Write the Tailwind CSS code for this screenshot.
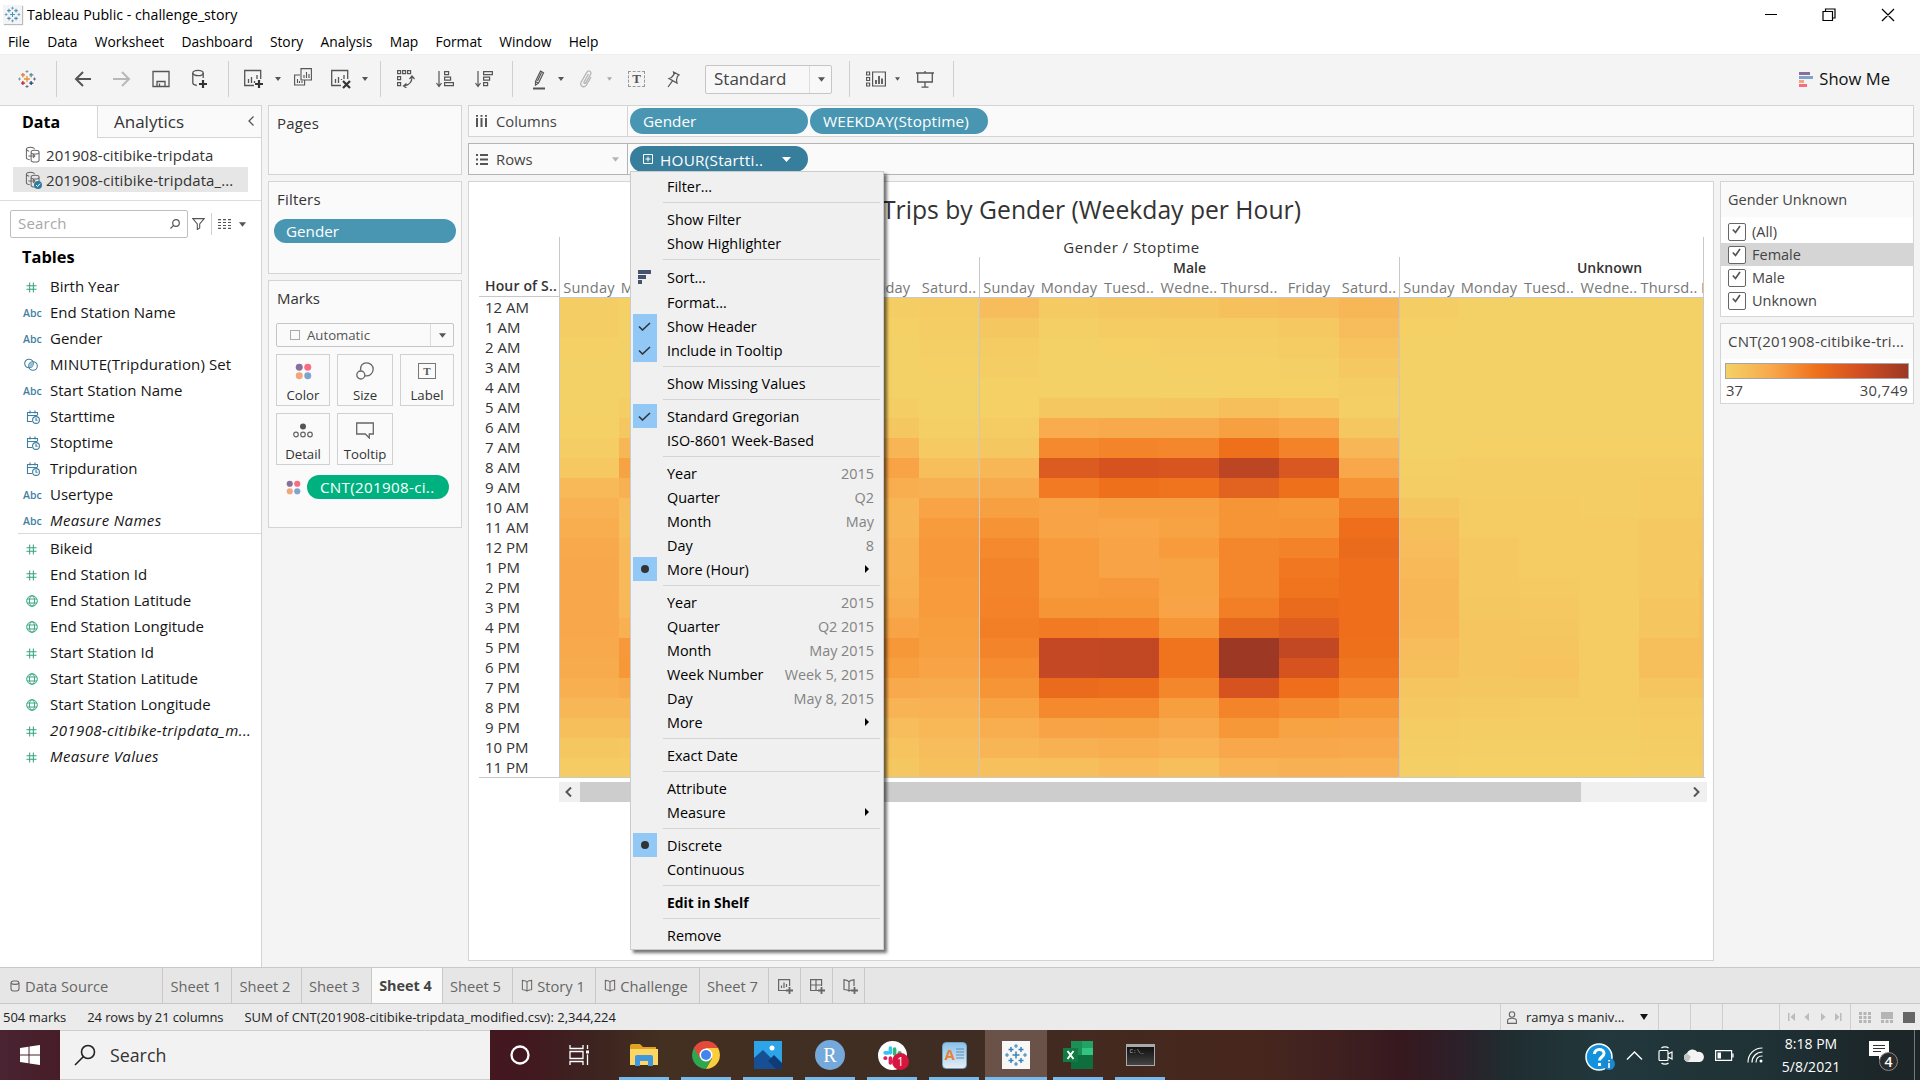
<!DOCTYPE html>
<html lang="en">
<head>
<meta charset="utf-8">
<title>Tableau Public - challenge_story</title>
<script src="https://cdn.jsdelivr.net/npm/@tailwindcss/browser@4"></script>
</head>
<body class="w-[1920px] h-[1080px] overflow-hidden relative bg-[#f4f4f4] text-[15px] leading-5 text-[#333] flex flex-col font-['Open_Sans','Noto_Sans',sans-serif] whitespace-nowrap">

<svg class="hidden">
  <symbol id="i-hash" viewBox="0 0 12 12"><path d="M4 .5v11M8 .5v11M.5 4h11M.5 8h11" fill="none" stroke="#31a37c" stroke-width="1.1"/></symbol>
  <symbol id="i-globe" viewBox="0 0 12 12"><g fill="none" stroke="#3aa883" stroke-width="1"><circle cx="6" cy="6" r="5.3"/><ellipse cx="6" cy="6" rx="2.6" ry="5.3"/><path d="M1 4h10M1 8h10"/></g></symbol>
  <symbol id="i-set" viewBox="0 0 14 14"><g fill="none" stroke="#3f7f9f" stroke-width="1.1"><circle cx="5" cy="5.500" r="4.300"/><circle cx="9" cy="8" r="4.300"/></g><path d="M5.200 6c1.300-2 2.800-2.400 3.800-1.700.5 2.500-.3 4.300-2.600 5.200-1.400-.6-1.800-2-1.200-3.500z" fill="#9cbfd0"/></symbol>
  <symbol id="i-cal" viewBox="0 0 14 14"><g fill="none" stroke="#3f7f9f" stroke-width="1.100"><path d="M6 11.500H1.500V2.500h10V5M1.500 5.500h10M4 .5v3M9 .5v3"/><circle cx="10" cy="10" r="3.400"/><path d="M10 8v2.200h1.600"/></g></symbol>
  <symbol id="i-db" viewBox="0 0 16 18"><g fill="none" stroke="#666" stroke-width="1.100"><path d="M1.500 3.500v9c0 1 1.500 1.800 3.500 2M1.500 3.500c0-1.300 2-2.200 4.300-2.200s4.200.9 4.200 2.200M1.500 3.500c0 1 1.500 1.800 3 2"/><path d="M6.500 6.500v8.500c0 1 2 2 4.200 2s4.300-1 4.300-2V6.500c0-1-2-2-4.300-2s-4.200 1-4.200 2zc0 1 2 2 4.200 2s4.300-1 4.300-2M3.500 10.500h7M8.500 8.500l2 2-2 2"/></g></symbol>
  <symbol id="i-tab" viewBox="0 0 24 24"><g fill="none" stroke-width="1.500" stroke="currentColor"><path d="M12 8.500v7M8.500 12h7"/><path d="M7 4v5M4.500 6.500h5M17 4v5M14.500 6.500h5M7 15v5M4.500 17.500h5M17 15v5M14.500 17.500h5"/><path d="M12 1v4M10 3h4M12 19v4M10 21h4M3 10v4M1 12h4M21 10v4M19 12h4" stroke-width="1.100"/></g></symbol>
  <symbol id="i-dots" viewBox="0 0 18 18"><circle cx="4.500" cy="4.500" r="3.700" fill="#8a6f9a"/><circle cx="13.500" cy="4.500" r="3.700" fill="#f76c80"/><circle cx="4.500" cy="13.500" r="3.700" fill="#f2a679"/><circle cx="13.500" cy="13.500" r="3.700" fill="#7ea3cd"/></symbol>
  <symbol id="i-story" viewBox="0 0 12 14"><path d="M6 3.500L4.500 2 1 1.500v10l3.500.5L6 13l1.500-1 3.500-.5v-10L7.500 2zM6 3.500V13" fill="none" stroke="#666" stroke-width="1.100"/></symbol>
</svg>

<!-- Title bar -->
<header class="h-[29px] shrink-0 bg-white flex items-center text-black">
  <div class="ml-[3px] size-[19px] flex items-center justify-center bg-[#f4f4f4] shadow-[1px_1px_1px_#bbb] text-[#4b93bd]"><svg class="size-[17px]"><use href="#i-tab"/></svg></div>
  <span class="ml-[5px] grow text-[14.200px]">Tableau Public - challenge_story</span>
  <svg class="w-[155px] h-7" viewBox="0 0 155 28" fill="none" stroke="#000" stroke-width="1.200"><path d="M0 13.500h12M58 10.500h9.500v9H58zM60.500 10V8h9.500v9h-2M117 8l12 12M129 8l-12 12"/></svg>
</header>
<nav class="h-[25px] shrink-0 bg-white flex items-center text-black text-[13.800px] pl-2 pt-px gap-[17.300px]">
  <span>File</span><span>Data</span><span>Worksheet</span><span>Dashboard</span><span>Story</span><span>Analysis</span><span>Map</span><span>Format</span><span>Window</span><span>Help</span>
</nav>

<!-- Toolbar -->
<div class="h-[51px] shrink-0 border-t border-[#eee] flex items-center pb-[2px] text-[#555]">
  <svg class="ml-[18px] size-[18px]" viewBox="0 0 24 24" fill="none" stroke-width="1.700"><path d="M12 8v8M8 12h8" stroke="#eb912c"/><path d="M6.500 4v5.500M4 6.500h5.500" stroke="#e8762d"/><path d="M17.500 4v5.500M15 6.500h5.500" stroke="#5b879b"/><path d="M6.500 14.500V20M4 17.500h5.500" stroke="#c72035"/><path d="M17.500 14.500V20M15 17.500h5.500" stroke="#1f457e"/><path d="M12 0v4M10 2h4M2 10v4M0 12h4" stroke="#7099a6" stroke-width="1.200"/><path d="M12 20v4M10 22h4M22 10v4M20 12h4" stroke="#59658a" stroke-width="1.200"/></svg>
  <i class="ml-5 w-px h-9 bg-[#d0d0d0]"></i>
  <svg class="ml-[17px] w-[18px] h-4" viewBox="0 0 18 16" fill="none" stroke="currentColor" stroke-width="2"><path d="M17 8H2M9 1L2 8l7 7"/></svg>
  <svg class="ml-[21px] w-[18px] h-4 text-[#b8b8b8]" viewBox="0 0 18 16" fill="none" stroke="currentColor" stroke-width="2"><path d="M0 8h16M9 1l7 7-7 7"/></svg>
  <svg class="ml-[21px] size-[18px]" viewBox="0 0 18 18" fill="none" stroke="currentColor" stroke-width="1.300"><path d="M1 1.500h16v15H1zM5 16.500v-5h8v5M7.500 13.500v3"/></svg>
  <svg class="ml-[22px] w-[18px] h-5" viewBox="0 0 18 20" fill="none" stroke="currentColor" stroke-width="1.300"><ellipse cx="6" cy="4" rx="5.200" ry="2.700"/><path d="M.8 4v10c0 1 1.500 2 4 2.500M11.200 4v5"/><path d="M11 11v8M7 15h8" stroke="#333" stroke-width="2.200"/></svg>
  <i class="ml-[18px] w-px h-9 bg-[#d0d0d0]"></i>
  <svg class="ml-[15px] size-5" viewBox="0 0 20 20" fill="none" stroke="currentColor" stroke-width="1.300"><path d="M10 16.500H.700v-15h16V10M4.500 14v-4M7.500 14v-6M10.500 14v-2M13 10V6" /><path d="M15 11v8M11 15h8" stroke="#333" stroke-width="2.200"/></svg>
  <svg class="ml-[11px] w-[6px] h-1" viewBox="0 0 6 4"><path d="M0 0h6L3 4z" fill="#555"/></svg>
  <svg class="ml-[13px] size-[18px] -mt-1" viewBox="0 0 18 18" fill="none" stroke="currentColor" stroke-width="1.100"><path d="M6 7H.600v10h10v-5M7 .600h10.400V12H7zM10 10V7M12.500 10V4M15 10V6M3.500 15v-4M5.500 15v-2M8 15v-2"/></svg>
  <svg class="ml-[19px] size-5" viewBox="0 0 20 20" fill="none" stroke="currentColor" stroke-width="1.300"><path d="M10 16.500H.700v-15h16V10M4.500 14v-4M7.500 14v-6M10.500 11v-1M13 10V6" /><path d="M12 12l7 7M19 12l-7 7" stroke="#333" stroke-width="2.200"/></svg>
  <svg class="ml-[11px] w-[6px] h-1" viewBox="0 0 6 4"><path d="M0 0h6L3 4z" fill="#555"/></svg>
  <i class="ml-3 w-px h-9 bg-[#d0d0d0]"></i>
  <svg class="ml-4 w-[18px] h-[18px]" viewBox="0 0 18 18" fill="none" stroke="currentColor" stroke-width="1.200"><path d="M.6.600h3v3h-3zM5.600.600h3v3h-3zM10.600.600h3v3h-3zM.6 6.600h3v3h-3zM.6 12.600h3v3h-3zM15 7c0 4-2.500 8-8 9M12.500 9L15 6l2.500 3M9.500 13.500L6.500 16l3 2"/></svg>
  <svg class="ml-[21px] w-[18px] h-[18px]" viewBox="0 0 18 18" fill="none" stroke="currentColor" stroke-width="1.200"><path d="M3 1v15M.5 13L3 16.500 5.500 13M8.600 1.600h4v3h-4zM8.600 7.100h6v3h-6zM8.600 12.600h8.800v3H8.600z"/></svg>
  <svg class="ml-[21px] w-[18px] h-[18px]" viewBox="0 0 18 18" fill="none" stroke="currentColor" stroke-width="1.200"><path d="M3 1v15M.5 13L3 16.500 5.500 13M8.600 1.600h8.800v3H8.600zM8.600 7.100h6v3h-6zM8.600 12.600h4v3h-4z"/></svg>
  <i class="ml-[19px] w-px h-9 bg-[#d0d0d0]"></i>
  <svg class="ml-[19px] w-[16px] h-[20px] mt-[2px]" viewBox="0 0 16 20" fill="none" stroke="currentColor" stroke-width="1.200"><path d="M3.500 11.500L8.500 1l3 1.700-5 10.500-3 2zM3.500 11.500l3 1.700M5.500 11l4-8.500"/><path d="M1 18.500h12" stroke-width="2"/></svg>
  <svg class="ml-[10px] w-[6px] h-1" viewBox="0 0 6 4"><path d="M0 0h6L3 4z" fill="#555"/></svg>
  <svg class="ml-[15px] w-[14px] h-[18px] text-[#b5b5b5]" viewBox="0 0 14 18" fill="none" stroke="currentColor" stroke-width="1.300"><path d="M9.500 4L5 12c-.6 1.200 1 2 1.700.8L11.500 4.500C13 1.500 9.500-.5 7.800 2.300L2.200 12c-2 4 3 6.500 5.200 3L12 7"/></svg>
  <svg class="ml-[14px] w-[5px] h-1" viewBox="0 0 6 4"><path d="M0 0h6L3 4z" fill="#aaa"/></svg>
  <div class="ml-4 w-[17px] h-4 border border-dashed border-[#999] flex items-center justify-center font-['Liberation_Serif',serif] font-bold text-[13px]">T</div>
  <svg class="ml-[22px] w-[13px] h-[17px]" viewBox="0 0 13 17" fill="none" stroke="currentColor" stroke-width="1.200"><path d="M6.500 1l5.500 3-1.500 1.200L9.500 9l.5 3-8-4.500 2.500-1 2.500-3zM5.500 9.800L1 16"/></svg>
  <div class="ml-[25px] w-[127px] h-[29px] mt-px rounded-xs border border-[#c6c6c6] bg-[#f8f8f8] flex items-center pl-2 text-[17px] text-[#444]"><span class="w-[95px] pb-px">Standard</span><i class="w-px h-full bg-[#ddd]"></i><svg class="ml-2 w-[7px] h-[5px]" viewBox="0 0 6 4"><path d="M0 0h6L3 4z" fill="#555"/></svg></div>
  <i class="ml-[17px] w-px h-9 bg-[#d0d0d0]"></i>
  <svg class="ml-4 w-5 h-4" viewBox="0 0 20 16" fill="none" stroke="currentColor" stroke-width="1.200"><path d="M.6 1h3v3h-3zM.6 6.500h3v3h-3zM.6 12h3v3h-3zM6.600 1h12.800v14H6.600z"/><path d="M10 13V9M13 13V5M16 13V7.500" stroke-width="1.800"/></svg>
  <svg class="ml-[9px] w-[5px] h-1" viewBox="0 0 6 4"><path d="M0 0h6L3 4z" fill="#555"/></svg>
  <svg class="ml-4 w-[18px] h-[17px]" viewBox="0 0 18 17" fill="none" stroke="currentColor" stroke-width="1.300"><path d="M0 2h18M9 0v2M1.700 2v9h14.600V2M9 11v5M5.500 16.200h7"/></svg>
  <i class="ml-[19px] w-px h-9 bg-[#d0d0d0]"></i>
  <div class="ml-auto mr-[30px] flex items-center gap-[6px] text-[#111]"><svg class="w-[14px] h-[15px]" viewBox="0 0 14 15"><path d="M0 0h11v3H0z" fill="#8a6f9a"/><path d="M0 4h14v3H0z" fill="#7ea3cd"/><path d="M0 8h5v3H0z" fill="#f2a679"/><path d="M0 12h8v3H0z" fill="#f76c80"/></svg><span class="text-[16.600px]">Show Me</span></div>
</div>

<!-- Work area -->
<main class="h-[862px] shrink-0 flex">
  <!-- Data pane -->
  <aside class="w-[262px] shrink-0 bg-white border-r border-t border-[#d4d4d4] flex flex-col">
    <div class="h-8 shrink-0 flex items-center">
      <div class="w-[97px] pl-[22px] pb-px font-bold text-[16px] text-black">Data</div>
      <div class="grow h-full border-l border-b border-[#d4d4d4] bg-[#fafafa] flex items-center justify-between pl-4 pr-[7px] text-[17px]">Analytics<svg class="w-[6px] h-[10px] mb-[2px]" viewBox="0 0 6 10" fill="none" stroke="#555" stroke-width="1.300"><path d="M5.500.5L1 5l4.500 4.500"/></svg></div>
    </div>
    <div class="mt-1 ml-[13px] w-[235px] h-[25px] flex items-center pl-3 gap-[6px]"><svg class="w-[15px] h-[17px]"><use href="#i-db"/></svg><span class="tracking-[0.050px]">201908-citibike-tripdata</span></div>
    <div class="ml-[13px] w-[235px] h-[25px] bg-[#e6e6e6] flex items-center pl-3 gap-[6px]"><span class="relative"><svg class="w-[15px] h-[17px]"><use href="#i-db"/></svg><svg class="absolute -right-[2px] -bottom-px size-[8px]" viewBox="0 0 8 8"><circle cx="4" cy="4" r="4" fill="#2f7c9f"/><path d="M2 4l1.500 1.500L6 2.700" stroke="#fff" fill="none"/></svg></span><span class="tracking-[0.100px]">201908-citibike-tripdata_...</span></div>
    <div class="mt-2 h-px shrink-0 bg-[#dcdcdc]"></div>
    <div class="mt-[9px] h-7 shrink-0 flex items-center pl-[10px]">
      <div class="w-[178px] h-7 border border-[#bfbfbf] rounded-xs flex items-center justify-between pl-[7px] pr-[7px] text-[#a8a8a8]"><span class="pb-[2px] tracking-[0.200px]">Search</span><svg class="size-[10px]" viewBox="0 0 10 10" fill="none" stroke="#555" stroke-width="1.200"><circle cx="6" cy="4" r="3.300"/><path d="M3.700 6.300L.5 9.500"/></svg></div>
      <svg class="ml-[4px] w-[13px] h-3" viewBox="0 0 13 12" fill="none" stroke="#555" stroke-width="1.100"><path d="M.8.600h11.400L7.700 6v4L5.300 11.500V6z"/></svg>
      <i class="ml-[6px] w-px h-[22px] bg-[#d0d0d0]"></i>
      <svg class="ml-[6px] w-[13px] h-[10px]" viewBox="0 0 13 10" stroke="#555" stroke-width="1.200"><path d="M0 .6h13M0 3.500h13M0 6.500h13M0 9.400h13" stroke-dasharray="3 2"/></svg>
      <svg class="ml-[8px] w-[7px] h-[5px]" viewBox="0 0 6 4"><path d="M0 0h6L3 4z" fill="#555"/></svg>
    </div>
    <div class="pl-[22px] mt-[9px] mb-[7px] font-bold text-[16.400px] text-black">Tables</div>
    <div id="dims" class="text-[#151515]"></div>
    <div class="ml-[18px] -mt-px h-px shrink-0 bg-[#d9d9d9]"></div>
    <div id="meas" class="mt-[2px] text-[#151515]"></div>
  </aside>

  <!-- Cards -->
  <section class="ml-[6px] w-[194px] shrink-0 flex flex-col gap-[6px]">
    <div class="h-[70px] border border-[#d4d4d4] bg-[#fafafa] pl-2 pt-[7px] tracking-[0.200px]">Pages</div>
    <div class="h-[93px] border border-[#d4d4d4] bg-[#fafafa] pl-2 pt-[7px]"><span class="tracking-[0.200px]">Filters</span>
      <div class="-ml-[3px] mt-[10px] w-[182px] h-6 rounded-full bg-[#4996b2] text-white pl-3 font-medium leading-[25px] text-[15.200px]">Gender</div>
    </div>
    <div class="h-[248px] border border-[#d4d4d4] bg-[#fafafa] pl-[7px] pt-[7px]">
      <div class="pl-px">Marks</div>
      <div class="mt-[15px] w-[178px] h-6 border border-[#c6c6c6] rounded-xs flex items-center pl-[13px] text-[13.200px] text-[#555]"><i class="size-[10px] border border-[#aaa] mr-[7px]"></i><span class="w-[123px] pb-px">Automatic</span><i class="w-px h-full bg-[#ddd]"></i><svg class="ml-2 w-[7px] h-[5px]" viewBox="0 0 6 4"><path d="M0 0h6L3 4z" fill="#555"/></svg></div>
      <div class="mt-[7px] grid grid-cols-[54px_56px_54px] gap-[7px] text-[13.200px] text-center">
        <div class="h-[52px] border border-[#d0d0d0] flex flex-col items-center pt-2"><svg class="size-[17px]"><use href="#i-dots"/></svg><span class="mt-[5px]">Color</span></div>
        <div class="h-[52px] border border-[#d0d0d0] flex flex-col items-center pt-[7px]"><svg class="size-[18px]" viewBox="0 0 18 18" fill="none" stroke="#666" stroke-width="1.300"><path d="M4.500 8.500C4 4 6.500.8 10.500.8c4 0 6.700 3 6.700 6.500 0 4.500-4 7.200-8.200 6.500"/><circle cx="4.800" cy="13" r="4"/></svg><span class="mt-[5px]">Size</span></div>
        <div class="h-[52px] border border-[#d0d0d0] flex flex-col items-center pt-2"><span class="w-[18px] h-4 border-[1.500px] border-[#777] font-['Liberation_Serif',serif] font-bold text-[11px] leading-[14px] text-[#555]">T</span><span class="mt-[6px]">Label</span></div>
        <div class="h-[52px] border border-[#d0d0d0] flex flex-col items-center pt-2"><svg class="w-5 h-[17px]" viewBox="0 0 20 17" fill="none" stroke="#666" stroke-width="1.200"><circle cx="10" cy="4.500" r="3" fill="#555" stroke="none"/><circle cx="3" cy="12.500" r="2.300"/><circle cx="10" cy="12.500" r="2.300"/><circle cx="17" cy="12.500" r="2.300"/></svg><span class="mt-[5px]">Detail</span></div>
        <div class="h-[52px] border border-[#d0d0d0] flex flex-col items-center pt-2"><svg class="w-[18px] h-[17px]" viewBox="0 0 18 17" fill="none" stroke="#666" stroke-width="1.300"><path d="M.700 1h16.600v11h-4v4l-4-4H.700z"/></svg><span class="mt-[5px]">Tooltip</span></div>
      </div>
      <div class="mt-[10px] pl-[10px] flex items-center gap-[6px]"><svg class="size-[15px]"><use href="#i-dots"/></svg><div class="w-[142px] h-6 rounded-full bg-[#00b180] text-white font-medium pl-[13px] leading-6 text-[15.200px] tracking-[0.300px]">CNT(201908-ci..</div></div>
    </div>
  </section>

  <!-- Shelves and view -->
  <section class="ml-[6px] w-[1446px] shrink-0 flex flex-col gap-[6px]">
    <div class="h-8 shrink-0 border border-[#d4d4d4] bg-[#fafafa] flex items-center">
      <svg class="ml-[7px] w-[11px] h-3" viewBox="0 0 11 12" stroke="#555" stroke-width="2"><path d="M1 0v1.800M5.500 0v1.800M10 0v1.800M1 3v9M5.500 3v9M10 3v9"/></svg>
      <span class="ml-[9px] w-[131px] text-[14.800px] text-[#444]">Columns</span><i class="w-px h-full bg-[#d4d4d4]"></i>
      <div class="ml-[2px] w-[178px] h-[26px] rounded-full bg-[#4996b2] text-white pl-[13px] leading-[27px] font-medium text-[15.300px]">Gender</div>
      <div class="ml-[2px] w-[178px] h-[26px] rounded-full bg-[#4996b2] text-white pl-[13px] leading-[27px] font-medium text-[15.300px] tracking-[0.150px]">WEEKDAY(Stoptime)</div>
    </div>
    <div class="h-8 shrink-0 border border-[#b4b4b4] bg-[#fafafa] flex items-center">
      <svg class="ml-[7px] w-3 h-[11px]" viewBox="0 0 12 11" stroke="#555" stroke-width="2"><path d="M0 1h2M0 5.500h2M0 10h2M4 1h8M4 5.500h8M4 10h8"/></svg>
      <span class="ml-2 w-[116px] text-[14.800px] text-[#444]">Rows</span><svg class="w-[7px] h-[5px] mr-[8px]" viewBox="0 0 6 4"><path d="M0 0h6L3 4z" fill="#b5b5b5"/></svg><i class="w-px h-full bg-[#b4b4b4]"></i>
      <div class="ml-[2px] w-[178px] h-[26px] rounded-full bg-[#377d9c] text-white pl-[13px] flex items-center font-medium text-[15.300px]"><svg class="size-[10px]" viewBox="0 0 10 10" fill="none" stroke="#fff"><path d="M.5.500h9v9h-9zM5 2.500v5M2.500 5h5"/></svg><span class="ml-[7px] w-[122px] pt-px tracking-[0.250px]">HOUR(Startti..</span><svg class="w-[9px] h-[5px]" viewBox="0 0 9 5"><path d="M0 0h9L4.500 5z" fill="#fff"/></svg></div>
    </div>
    <div class="flex gap-[6px]">
      <div class="w-[1246px] h-[780px] border border-[#d4d4d4] bg-white flex flex-col">
        <h1 class="pl-[413px] pt-[8px] h-[55px] text-[24.700px] leading-10 text-[#333]">Trips by Gender (Weekday per Hour)</h1>
        <div class="ml-[10px] w-[1226px] h-[541px] flex border-b border-[#c8c8c8] shrink-0">
          <div class="w-20 shrink-0 flex flex-col">
            <div class="h-[61px] border-b border-[#c8c8c8] flex items-end pl-[6px] font-semibold text-[14px] tracking-[0.150px] text-[#333]">Hour of S..</div>
            <div id="hours" class="pl-[6px] text-[15px] text-[#333]"></div>
          </div>
          <div class="relative w-[1145px] border-x border-[#c8c8c8] overflow-hidden">
            <div class="h-[61px] border-b border-[#c8c8c8]">
              <div class="h-5 text-center text-[15px] tracking-[0.450px]">Gender / Stoptime</div>
              <div class="h-5 flex text-center font-semibold text-[14px]"><span class="w-[419px] shrink-0"></span><span class="w-[420px] shrink-0 border-l border-[#c8c8c8] pt-px">Male</span><span class="w-[420px] shrink-0 border-l border-[#c8c8c8] pt-px">Unknown</span></div>
              <div id="days" class="h-5 -ml-px flex text-[14.600px] text-[#777] tracking-[0.200px]"></div>
            </div>
            <div id="heat" class="grid grid-cols-[repeat(19,60px)_5px] auto-rows-[20px] -ml-px -mt-px border-t border-[#c8c8c8]"></div>
            <i class="absolute left-[419px] top-10 bottom-0 w-px bg-[#c8c8c8]"></i>
            <i class="absolute left-[839px] top-10 bottom-0 w-px bg-[#c8c8c8]"></i>
          </div>
        </div>
        <div class="ml-[90px] mt-1 w-[1148px] h-5 bg-[#f0f0f0] flex items-center">
          <svg class="ml-[6px] w-[7px] h-[10px]" viewBox="0 0 7 10" fill="none" stroke="#555" stroke-width="2"><path d="M6 .5L1.500 5 6 9.500"/></svg>
          <i class="ml-[8px] w-[1001px] h-full bg-[#cdcdcd]"></i>
          <svg class="ml-auto mr-[7px] w-[7px] h-[10px]" viewBox="0 0 7 10" fill="none" stroke="#555" stroke-width="2"><path d="M1 .5L5.500 5 1 9.500"/></svg>
        </div>
      </div>
      <div class="w-[194px] flex flex-col gap-[6px]">
        <div class="h-[136px] border border-[#d4d4d4] bg-white text-[14.500px] text-[#444]">
          <div class="h-[35px] bg-[#fafafa] pl-[7px] leading-9">Gender Unknown</div>
          <div id="checks" class="pt-[3px]"></div>
        </div>
        <div class="h-[81px] border border-[#d4d4d4] bg-white text-[14.800px] text-[#444]">
          <div class="h-[35px] bg-[#fafafa] pl-[7px] leading-[34px] text-[15px] tracking-[0.200px]">CNT(201908-citibike-tri...</div>
          <div class="mt-1 mx-1 h-4 border border-[#a5a5a5] bg-[linear-gradient(90deg,#f4d166,#f8a84c_25%,#ef701b_50%,#d14f22_74%,#9c3824)]"></div>
          <div class="flex justify-between px-[5px] mt-px"><span>37</span><span class="tracking-[0.350px]">30,749</span></div>
        </div>
      </div>
    </div>
  </section>
</main>

<!-- Sheet tabs -->
<div class="h-[37px] shrink-0 bg-[#e6e6e6] border-y border-[#c8c8c8] flex text-[14.700px] leading-9 text-[#666] text-center">
  <div class="w-[163px] border-r border-[#c8c8c8] flex items-center pl-[10px] gap-[5px]"><svg class="w-[10px] h-3" viewBox="0 0 10 12" fill="none" stroke="#666" stroke-width="1.100"><rect x="1" y="1" width="8" height="10" rx="2.500"/><path d="M1 3.500c2 1.200 6 1.200 8 0"/></svg>Data Source</div>
  <div class="w-[69px] pr-[2px] border-r border-[#c8c8c8]">Sheet 1</div>
  <div class="w-[70px] pr-[3px] border-r border-[#c8c8c8]">Sheet 2</div>
  <div class="w-[70px] pr-[4px] border-r border-[#c8c8c8]">Sheet 3</div>
  <div class="w-[71px] pr-[3px] border-r border-[#c8c8c8] bg-[#fafafa] font-bold text-[14.400px] text-[#444]">Sheet 4</div>
  <div class="w-[70px] pr-[4px] border-r border-[#c8c8c8]">Sheet 5</div>
  <div class="w-[83px] pr-[2px] border-r border-[#c8c8c8] flex items-center justify-center gap-1"><svg class="w-3 h-[13px]"><use href="#i-story"/></svg>Story 1</div>
  <div class="w-[104px] pr-[3px] border-r border-[#c8c8c8] flex items-center justify-center gap-1"><svg class="w-3 h-[13px]"><use href="#i-story"/></svg>Challenge</div>
  <div class="w-[69px] pr-[3px] border-r border-[#c8c8c8]">Sheet 7</div>
  <div class="w-8 border-r border-[#c8c8c8] flex items-center justify-center"><svg class="size-[15px] mt-[2px] ml-px" viewBox="0 0 15 15" fill="none" stroke="#666" stroke-width="1.200"><path d="M8 11.500H.600V.600h11V7M3.500 9V6.500M6 9V3.500M8.500 8V5"/><path d="M11.500 8v7M8 11.500h7" stroke-width="1.800"/></svg></div>
  <div class="w-8 border-r border-[#c8c8c8] flex items-center justify-center"><svg class="size-[15px] mt-[2px] ml-[2px]" viewBox="0 0 15 15" fill="none" stroke="#666" stroke-width="1.200"><path d="M8 11.500H.600V.600h11V7M6 .6v11M.6 6h11"/><path d="M11.500 8v7M8 11.500h7" stroke-width="1.800"/></svg></div>
  <div class="w-8 border-r border-[#c8c8c8] flex items-center justify-center"><svg class="size-[15px] mt-[2px] ml-[3px]" viewBox="0 0 15 15" fill="none" stroke="#666" stroke-width="1.200"><path d="M8 11L6 12 4.500 11 1 10.500V.800l3.500.7L6 3l1.500-1.500L11 .800V7M6 3v9"/><path d="M11.500 8v7M8 11.500h7" stroke-width="1.800"/></svg></div>
</div>
<!-- Status bar -->
<div class="h-[26px] shrink-0 bg-[#ebebeb] flex items-center text-[13px] text-[#222] pl-[3px]">
  <span>504 marks</span><span class="ml-[21px] tracking-[-0.120px]">24 rows by 21 columns</span><span class="ml-[21px]">SUM of CNT(201908-citibike-tripdata_modified.csv): 2,344,224</span>
  <div class="ml-auto h-full flex items-center">
    <div class="w-[158px] h-full border-l border-[#cfcfcf] flex items-center pl-[6px]"><svg class="w-[10px] h-[13px]" viewBox="0 0 10 13" fill="none" stroke="#666" stroke-width="1.100"><circle cx="5" cy="3.500" r="2.700"/><path d="M.6 12.400V9.500C.6 8 2 7.300 5 7.300s4.400.7 4.400 2.200v2.900z"/></svg><span class="ml-[9px] w-[114px] text-[13px]">ramya s maniv...</span><svg class="w-2 h-[6px]" viewBox="0 0 8 6"><path d="M0 0h8L4 6z" fill="#111"/></svg></div>
    <i class="w-8 h-full border-l border-[#cfcfcf]"></i><i class="w-8 h-full border-l border-[#cfcfcf]"></i><i class="w-[57px] h-full border-l border-[#cfcfcf]"></i>
    <div class="w-[71px] h-full border-l border-[#cfcfcf] flex items-center justify-between px-2"><svg class="w-full h-2" viewBox="0 0 54 8" fill="#bbb"><path d="M0 0h1.500v8H0zM7 0v8L2.500 4zM21 0v8l-4.500-4zM33 0v8l4.500-4zM47 0v8l4.500-4zM52 0h1.500v8H52z"/></svg></div>
    <div class="w-[70px] h-full border-l border-[#cfcfcf] flex items-center pl-2 gap-[10px]">
      <svg class="w-3 h-[11px]" viewBox="0 0 12 11" fill="#b5b5b5"><path d="M0 0h3v3H0zM4.500 0h3v3h-3zM9 0h3v3H9zM0 4h3v3H0zM4.500 4h3v3h-3zM9 4h3v3H9zM0 8h3v3H0zM4.500 8h3v3h-3zM9 8h3v3H9z"/></svg>
      <svg class="w-3 h-[11px]" viewBox="0 0 12 11" fill="#b5b5b5"><path d="M0 0h12v7H0zM0 8h3v3H0zM4.500 8h3v3h-3zM9 8h3v3H9z"/></svg>
      <i class="w-3 h-[11px] bg-[#666]"></i>
    </div>
  </div>
</div>

<!-- Windows taskbar -->
<footer class="h-[50px] shrink-0 flex items-stretch text-white bg-[linear-gradient(90deg,#4a2432_0,#461d28_60px,#42171f_520px,#3d2320_590px,#433021_660px,#3f2d24_960px,#432a20_1060px,#47261d_1260px,#3f2020_1340px,#37181f_1400px,#2c2029_1460px,#1f2d31_1510px,#22383c_1600px,#1f3236_1760px,#1c2629_1880px)]">
  <div class="w-[60px] flex items-center justify-center"><svg class="size-5" viewBox="0 0 20 20" fill="#fff"><path d="M0 3l8.500-1.200V9.500H0zM9.500 1.600L20 0v9.500H9.500zM0 10.500h8.500v7.700L0 17zM9.500 10.500H20V20L9.500 18.400z"/></svg></div>
  <div class="w-[430px] bg-[#f2f2f2] border-y border-[#cfcfcf] flex items-center text-[#333] text-[17.800px]"><svg class="ml-[14px] size-[22px]" viewBox="0 0 22 22" fill="none" stroke="#222" stroke-width="1.600"><circle cx="14" cy="8" r="6.500"/><path d="M9.500 12.500L1 21"/></svg><span class="ml-[14px]">Search</span></div>
  <div class="w-[60px] flex items-center justify-center"><svg class="size-5" viewBox="0 0 20 20" fill="none" stroke="#fff" stroke-width="2.300"><circle cx="10" cy="10" r="8.500"/></svg></div>
  <div class="w-[58px] flex items-center justify-center"><svg class="w-[21px] h-5" viewBox="0 0 21 20" fill="none" stroke="#fff" stroke-width="1.300"><path d="M1 0v3.500h13V0M1 6.500h13v7H1zM1 20v-3.500h13V20M18.500 0v4M18.500 9.500v10.500"/><path d="M17 5.500h3v3h-3z" fill="#fff" stroke="none"/></svg></div>
  <div id="apps" class="ml-[5px] flex">
    <div class="w-[62px] relative flex items-center justify-center"><svg class="w-7 h-6" viewBox="0 0 28 24"><path d="M0 3a2 2 0 012-2h8l3 3h13v4H0z" fill="#e0a321"/><path d="M0 6h28v16H0z" fill="#fdd663"/><path d="M5 23v-9q0-2 2-2h14q2 0 2 2v9h-5v-5h-8v5z" fill="#3f97dd"/></svg></div>
    <div class="w-[62px] relative flex items-center justify-center"><svg class="size-7" viewBox="0 0 28 28"><path d="M14 14L1.900 7A14 14 0 0126.100 7z" fill="#e24a3b"/><path d="M14 14L1.900 7A14 14 0 0014 28l6-10.500z" fill="#2fa650"/><path d="M14 14l6 3.500L14 28A14 14 0 0026.100 7H14z" fill="#fbcd3c"/><path d="M14 7h12.100A14 14 0 0014 0 14 14 0 001.900 7l6 10z" fill="#e24a3b"/><circle cx="14" cy="14" r="6.500" fill="#fff"/><circle cx="14" cy="14" r="5" fill="#4483f0"/></svg></div>
    <div class="w-[62px] relative flex items-center justify-center"><svg class="size-7" viewBox="0 0 28 28"><path d="M0 0h28v28H0z" fill="#2da3e8"/><path d="M0 17L9 9l19 19H0z" fill="#164f93"/><path d="M14 20l6-6 8 8v6h-6z" fill="#0f3c78"/><circle cx="18" cy="7" r="2.500" fill="#fff"/></svg></div>
    <div class="w-[62px] relative flex items-center justify-center"><div class="size-[30px] rounded-full bg-[#75a9db] flex items-center justify-center font-['Liberation_Serif',serif] text-[20px]">R</div></div>
    <div class="w-[62px] relative flex items-center justify-center"><div class="size-[29px] rounded-full bg-white flex items-center justify-center"><svg class="size-[19px]" viewBox="0 0 18 18" stroke-width="3.400" stroke-linecap="round"><path d="M7 2v4.500" stroke="#36c5f0"/><path d="M2 6.500h3" stroke="#36c5f0"/><path d="M11 3v4.500M16 6.500h-.5" stroke="#2eb67d"/><path d="M11 11.500h5M11 15.500v.5" stroke="#ecb22e"/><path d="M2 11.500h.5M7 11.500V16" stroke="#e01e5a"/></svg></div><b class="absolute left-[31px] top-[23px] size-[17px] rounded-full bg-[#d8153f] text-[12px] leading-[17px] text-center font-normal">1</b></div>
    <div class="w-[62px] relative flex items-center justify-center"><div class="w-[25px] h-[27px] rounded-sm bg-linear-to-b from-[#8cc3e8] to-[#e3edf4] border border-[#6ea3c4] text-[#e5813a] font-bold text-[15px] leading-[22px] pl-[2px] flex">A<svg class="mt-[5px] ml-px w-2 h-3" viewBox="0 0 8 12" stroke="#5d8fb5"><path d="M0 1h8M0 4h8M0 7h8M0 10h8"/></svg></div></div>
    <div class="w-[62px] relative flex items-center justify-center bg-[#6a5249]"><div class="size-[28px] bg-[#f7f7f7] flex items-center justify-center text-[#3f82b5]"><svg class="size-6"><use href="#i-tab"/></svg></div></div>
    <div class="w-[62px] relative flex items-center justify-center"><svg class="w-[30px] h-7" viewBox="0 0 30 28"><path d="M8 0h22v28H8z" fill="#21a366"/><path d="M8 0h11v14H8z" fill="#1c8f58"/><path d="M8 14h22v14H8z" fill="#0f6e3d"/><path d="M19 7h11v7H19z" fill="#33c481"/><path d="M0 7h15v14H0z" fill="#107c41"/><path d="M4.500 10l6 8M10.500 10l-6 8" stroke="#fff" stroke-width="2"/></svg></div>
    <div class="w-[62px] relative flex items-center justify-center"><div class="w-[29px] h-[22px] bg-linear-to-b from-[#111] to-[#444] border border-t-[3px] border-[#a9a9a9] font-['Liberation_Mono',monospace] text-[6px] text-[#bbb] leading-[10px] pl-[3px]">C:\_</div></div>
  </div>
  <div class="ml-auto flex items-center">
    <svg class="w-[30px] h-7 mt-[3px]" viewBox="0 0 30 28"><circle cx="14" cy="14" r="13" fill="#1292dc" stroke="#fff" stroke-width="1.500"/><path d="M9.500 11c0-6 9.500-6 9.500-.5 0 3.500-4.500 3.500-4.500 7M14.500 20v3" fill="none" stroke="#fff" stroke-width="3"/><circle cx="24" cy="21" r="6" fill="#1b87cc"/><path d="M24 17v1.500M24 20v5" stroke="#fff" stroke-width="1.600"/></svg>
    <svg class="ml-[11px] w-[17px] h-[9px]" viewBox="0 0 17 9" fill="none" stroke="#fff" stroke-width="1.400"><path d="M1 8.500L8.500 1 16 8.500"/></svg>
    <svg class="ml-[15px] w-[15px] h-[19px]" viewBox="0 0 15 19" fill="none" stroke="#fff" stroke-width="1.200"><rect x="1" y="4.500" width="9" height="10" rx="1"/><path d="M10 8l4-2v7l-4-2M3.500 2C5 .6 9 .6 10.500 2M3.500 17c1.500 1.400 5.500 1.400 7 0"/></svg>
    <svg class="ml-[10px] w-[21px] h-[14px]" viewBox="0 0 21 14"><path d="M5 14a4.500 4.500 0 01-1-8.700A6 6 0 0114.500 4 5 5 0 0117 14z" fill="#f3f3f3"/><path d="M8 9L5 14a4.500 4.500 0 01-1-8.700z" fill="#c4c4c4"/></svg>
    <svg class="ml-[11px] w-[19px] h-[11px]" viewBox="0 0 19 11" fill="none" stroke="#fff" stroke-width="1.200"><path d="M.6.600h16v9.800H.600zM18 3.500v4"/><path d="M2.500 2.500h3.500v6H2.500z" fill="#fff" stroke="none"/></svg>
    <svg class="ml-[13px] size-4" viewBox="0 0 16 16" fill="none" stroke="#fff" stroke-width="1.200"><path d="M1 15.500C1 7 7 1 15.500 1M5 15.500C5 9.500 9.500 5 15.500 5M9 15.500c0-4 2.500-6.500 6.500-6.500"/><circle cx="14" cy="14" r="1.500" fill="#fff" stroke="none"/></svg>
    <div class="ml-[18px] w-[60px] text-center text-[14px] leading-[23px]">8:18 PM<br>5/8/2021</div>
    <div class="ml-[28px] relative w-[45px] h-7"><svg class="size-5" viewBox="0 0 20 20"><path d="M0 0h20v15h-6l-4 4v-4H0z" fill="#fff"/><path d="M4 4.500h12M4 7.500h12M4 10.500h8" stroke="#333" stroke-width="1.200"/></svg><b class="absolute left-[10px] top-[11px] size-[19px] rounded-full bg-[#2b2b2b] border border-[#888] text-[14px] leading-[17px] text-center font-semibold">4</b></div>
    <i class="w-[6px] h-full border-l border-[#777]"></i>
  </div>
</footer>

<!-- Context menu of the HOUR pill -->
<div id="menu" class="absolute left-[630px] top-[171px] w-[254px] h-[779px] bg-[#f0f0f0] border border-[#ccc] shadow-[3px_3px_3px_rgba(0,0,0,0.55)] pt-[2px] text-[14.400px] text-black"></div>

<script>
const $ = id => document.getElementById(id);
const icon = { a: '<b class="w-4 text-[10.500px] font-semibold text-[#3f7f9f] -ml-px">Abc</b>', h: '<svg class="size-[11px] mx-[2px]"><use href="#i-hash"/></svg>', g: '<svg class="size-[12px] mx-[2px]"><use href="#i-globe"/></svg>', s: '<svg class="size-[14px]"><use href="#i-set"/></svg>', c: '<svg class="size-[14px] mx-[2px]"><use href="#i-cal"/></svg>' };
const field = ([k, t, c]) => `<div class="h-[26px] flex items-center pl-6"><span class="w-[26px] flex items-center">${icon[k]}</span><span class="pb-[2px] ${c || ''}">${t}</span></div>`;
$('dims').innerHTML = [['h','Birth Year'],['a','End Station Name'],['a','Gender'],['s','MINUTE(Tripduration) Set','tracking-[0.100px]'],['a','Start Station Name'],['c','Starttime'],['c','Stoptime'],['c','Tripduration'],['a','Usertype'],['a','Measure Names','italic tracking-[0.350px]']].map(field).join('');
$('meas').innerHTML = [['h','Bikeid'],['h','End Station Id'],['g','End Station Latitude'],['g','End Station Longitude'],['h','Start Station Id'],['g','Start Station Latitude'],['g','Start Station Longitude'],['h','201908-citibike-tripdata_m...','italic tracking-[0.400px]'],['h','Measure Values','italic tracking-[0.350px]']].map(field).join('');

$('checks').innerHTML = ['(All)','Female','Male','Unknown'].map((t, i) => `<div class="h-[23px] flex items-center pl-[7px] ${i === 1 ? 'bg-[#d5d5d5]' : ''}"><span class="size-[18px] border border-[#666] rounded-xs bg-white flex items-center justify-center"><svg class="size-[9px] -mt-1 -ml-[2px]" viewBox="0 0 9 9" fill="none" stroke="#555" stroke-width="1.700"><path d="M.8 4.500l2.700 3L8 1"/></svg></span><span class="ml-[6px]">${t}</span></div>`).join('');

$('hours').innerHTML = Array.from({ length: 24 }, (_, h) => `<div class="h-5">${h % 12 || 12} ${h < 12 ? 'AM' : 'PM'}</div>`).join('');
const week = ['Sunday','Monday','Tuesd..','Wedne..','Thursd..','Friday','Saturd..'];
$('days').innerHTML = Array.from({ length: 20 }, (_, i) => `<span class="${i === 19 ? 'w-[5px] pl-[2px] overflow-hidden' : 'w-[60px] text-center'} shrink-0">${week[i % 7]}</span>`).join('');

// Share of the colour range for each hour (rows) and gender/weekday (columns), in percent.
const data = [
 [3,1,1,1,1,3,4, 13,6,8,9,11,13,16, 3,0,0,0,0,0],
 [3,0,0,0,0,1,3, 8,2,4,4,5,7,13, 1,0,0,0,0,0],
 [1,0,0,0,0,0,2, 5,0,1,2,2,4,10, 0,0,0,0,0,0],
 [0,0,0,0,0,0,1, 3,0,0,1,1,2,7, 0,0,0,0,0,0],
 [0,0,0,0,0,0,0, 1,0,0,0,1,1,3, 0,0,0,0,0,0],
 [0,3,3,3,3,3,0, 1,8,8,9,12,10,2, 0,0,0,0,0,0],
 [1,8,8,8,8,8,2, 4,23,25,25,30,27,8, 0,0,0,0,0,0],
 [3,16,18,18,20,17,6, 8,40,42,41,50,43,16, 0,1,1,1,1,1],
 [7,29,30,30,35,28,12, 16,63,67,66,82,65,26, 2,3,3,3,3,3],
 [14,20,22,22,26,22,20, 24,46,50,49,59,50,36, 3,3,3,3,4,4],
 [19,13,14,14,17,17,28, 30,28,30,30,35,34,44, 9,4,4,3,5,6],
 [22,12,13,13,17,17,32, 36,28,27,29,35,36,51, 12,5,5,4,7,7],
 [25,14,14,14,19,20,33, 40,32,28,32,41,43,53, 13,7,4,4,7,9],
 [26,14,14,14,19,20,33, 42,32,28,29,41,47,51, 14,7,5,4,7,8],
 [26,14,14,14,19,21,32, 42,32,33,29,41,49,51, 16,7,6,4,7,11],
 [26,15,15,15,20,24,32, 43,35,35,28,44,53,51, 16,8,7,4,9,11],
 [26,20,20,18,26,28,31, 44,46,45,35,56,61,51, 15,9,8,4,9,12],
 [25,33,33,25,40,34,30, 42,78,79,49,100,79,50, 13,9,9,5,12,13],
 [24,34,34,25,40,31,28, 39,78,79,49,100,67,48, 12,9,10,5,12,12],
 [21,24,25,20,30,25,24, 35,53,52,41,67,51,43, 9,8,8,5,9,10],
 [16,16,17,14,20,18,19, 29,40,40,31,42,39,34, 7,6,4,4,6,6],
 [12,12,13,11,15,13,15, 22,28,29,25,34,29,28, 4,3,3,3,4,4],
 [8,7,8,7,10,10,13, 17,20,22,19,26,26,25, 3,2,2,2,3,4],
 [5,4,5,4,6,8,11, 11,12,14,12,18,20,19, 2,1,1,1,2,3]];
const stops = [[0,244,209,102],[8,245,199,97],[15,248,184,88],[26,248,168,74],[36,246,147,52],[50,239,112,27],[59,226,98,31],[67,214,83,32],[80,192,70,35],[100,156,56,36]];
const colour = v => {
  const j = Math.max(1, stops.findIndex(s => s[0] >= v)), a = stops[j - 1], b = stops[j], t = (v - a[0]) / (b[0] - a[0]);
  return `rgb(${[1, 2, 3].map(k => Math.round(a[k] + (b[k] - a[k]) * t)).join()})`;
};
$('heat').innerHTML = data.flat().map(v => `<i style="background:${colour(v)}"></i>`).join('');

const items = ['Filter...','-','Show Filter','Show Highlighter','-','Sort...|sort','Format...','Show Header|v','Include in Tooltip|v','-','Show Missing Values','-','Standard Gregorian|v','ISO-8601 Week-Based','-','Year||2015','Quarter||Q2','Month||May','Day||8','More (Hour)|o|>','-','Year||2015','Quarter||Q2 2015','Month||May 2015','Week Number||Week 5, 2015','Day||May 8, 2015','More||>','-','Exact Date','-','Attribute','Measure||>','-','Discrete|o','Continuous','-','Edit in Shelf|b','-','Remove'];
const lead = {
  v: '<span class="w-6 h-6 bg-[#91c8f6] flex items-center justify-center"><svg class="w-[13px] h-[9px] mr-[2px]" viewBox="0 0 13 9" fill="none" stroke="#333" stroke-width="1.600"><path d="M1 4.500l3.500 3.500L12 1"/></svg></span>',
  o: '<span class="w-6 h-6 bg-[#91c8f6] flex items-center justify-center"><i class="size-2 rounded-full bg-[#333]"></i></span>',
  sort: '<span class="w-6 pl-[5px]"><svg class="w-[13px] h-[14px]" viewBox="0 0 13 14" fill="#44546e"><path d="M0 0h13v4H0zM0 5h8v4H0zM0 10h4v4H0z"/></svg></span>' };
$('menu').innerHTML = items.map(s => {
  if (s === '-') return '<div class="h-[9px] pt-1 pl-8 pr-[3px]"><div class="h-px bg-[#d4d4d4]"></div></div>';
  const [t, k, r] = s.split('|');
  const right = r === '>' ? '<svg class="mr-[5px] w-1 h-2" viewBox="0 0 4 8"><path d="M0 0l4 4-4 4z"/></svg>' : `<span class="block pt-[2px]">${r || ''}</span>`;
  return `<div class="${k === 'sort' ? 'h-[26px]' : 'h-6'} flex items-center pl-[2px] pr-[9px]">${lead[k] || '<span class="w-6"></span>'}<span class="ml-[10px] grow pt-[2px] ${k === 'b' ? 'font-bold text-[13.800px]' : ''}">${t}</span><span class="text-[#838383]">${right}</span></div>`;
}).join('');

// Running-app underlines
document.querySelectorAll('#apps > div').forEach((d, i) => d.insertAdjacentHTML('beforeend', i === 6 ? '<u class="absolute bottom-0 left-0 w-full h-[3px] bg-[#76b9ed]"></u>' : '<u class="absolute bottom-0 left-[6px] right-[6px] h-[3px] bg-[#76b9ed]"></u>'));
</script>
</body>
</html>
